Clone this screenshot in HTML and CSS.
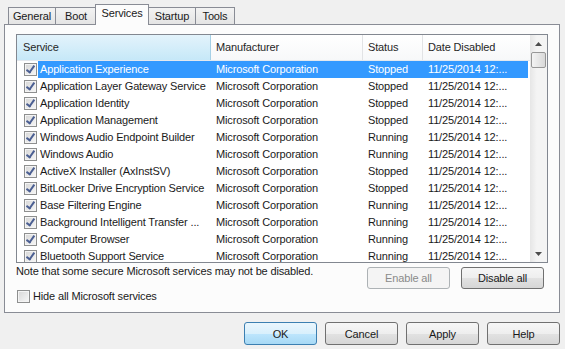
FILE: index.html
```html
<!DOCTYPE html>
<html lang="en">

<head>
  <meta charset="UTF-8">
  <title>System Configuration - Services</title>
  <link rel="stylesheet" href="styles.css">
</head>

<body>

  <div class="dialog">
    <div class="tabs">
      <div class="tab tab-general">General</div>
      <div class="tab tab-boot">Boot</div>
      <div class="tab tab-services active">Services</div>
      <div class="tab tab-startup">Startup</div>
      <div class="tab tab-tools">Tools</div>
    </div>

    <div class="panel">
      <div class="list">
        <div class="table">
          <div class="head">
            <div class="th sorted">Service</div>
            <div class="th">Manufacturer</div>
            <div class="th">Status</div>
            <div class="th">Date Disabled</div>
          </div>

          <div class="row selected">
            <div class="check-cell"><span class="check on"></span></div>
            <div class="cells"><span>Application Experience</span><span>Microsoft Corporation</span><span>Stopped</span><span>11/25/2014 12:...</span></div>
          </div>
          <div class="row">
            <div class="check-cell"><span class="check on"></span></div>
            <div class="cells"><span>Application Layer Gateway Service</span><span>Microsoft Corporation</span><span>Stopped</span><span>11/25/2014 12:...</span></div>
          </div>
          <div class="row">
            <div class="check-cell"><span class="check on"></span></div>
            <div class="cells"><span>Application Identity</span><span>Microsoft Corporation</span><span>Stopped</span><span>11/25/2014 12:...</span></div>
          </div>
          <div class="row">
            <div class="check-cell"><span class="check on"></span></div>
            <div class="cells"><span>Application Management</span><span>Microsoft Corporation</span><span>Stopped</span><span>11/25/2014 12:...</span></div>
          </div>
          <div class="row">
            <div class="check-cell"><span class="check on"></span></div>
            <div class="cells"><span>Windows Audio Endpoint Builder</span><span>Microsoft Corporation</span><span>Running</span><span>11/25/2014 12:...</span></div>
          </div>
          <div class="row">
            <div class="check-cell"><span class="check on"></span></div>
            <div class="cells"><span>Windows Audio</span><span>Microsoft Corporation</span><span>Running</span><span>11/25/2014 12:...</span></div>
          </div>
          <div class="row">
            <div class="check-cell"><span class="check on"></span></div>
            <div class="cells"><span>ActiveX Installer (AxInstSV)</span><span>Microsoft Corporation</span><span>Stopped</span><span>11/25/2014 12:...</span></div>
          </div>
          <div class="row">
            <div class="check-cell"><span class="check on"></span></div>
            <div class="cells"><span>BitLocker Drive Encryption Service</span><span>Microsoft Corporation</span><span>Stopped</span><span>11/25/2014 12:...</span></div>
          </div>
          <div class="row">
            <div class="check-cell"><span class="check on"></span></div>
            <div class="cells"><span>Base Filtering Engine</span><span>Microsoft Corporation</span><span>Running</span><span>11/25/2014 12:...</span></div>
          </div>
          <div class="row">
            <div class="check-cell"><span class="check on"></span></div>
            <div class="cells"><span>Background Intelligent Transfer ...</span><span>Microsoft Corporation</span><span>Running</span><span>11/25/2014 12:...</span></div>
          </div>
          <div class="row">
            <div class="check-cell"><span class="check on"></span></div>
            <div class="cells"><span>Computer Browser</span><span>Microsoft Corporation</span><span>Running</span><span>11/25/2014 12:...</span></div>
          </div>
          <div class="row">
            <div class="check-cell"><span class="check on"></span></div>
            <div class="cells"><span>Bluetooth Support Service</span><span>Microsoft Corporation</span><span>Running</span><span>11/25/2014 12:...</span></div>
          </div>
        </div>

        <div class="scrollbar">
          <div class="arrow">
            <svg width="7" height="4" viewBox="0 0 7 4"><path d="M0 4 L3.5 0 L7 4 Z" fill="#4d4d4d"/></svg>
          </div>
          <div class="thumb"></div>
          <div class="track"></div>
          <div class="arrow">
            <svg width="7" height="4" viewBox="0 0 7 4"><path d="M0 0 L3.5 4 L7 0 Z" fill="#4d4d4d"/></svg>
          </div>
        </div>
      </div>

      <div class="list-footer">
        <div class="note">Note that some secure Microsoft services may not be disabled.</div>
        <div class="list-buttons">
          <button class="btn" disabled>Enable all</button>
          <button class="btn">Disable all</button>
        </div>
      </div>

      <label class="hide-row"><span class="check"></span>Hide all Microsoft services</label>
    </div>

    <div class="dialog-buttons">
      <button class="btn small default">OK</button>
      <button class="btn small">Cancel</button>
      <button class="btn small">Apply</button>
      <button class="btn small">Help</button>
    </div>
  </div>

</body>

</html>
```

FILE: styles.css
```css
body {
  margin: 0;
  padding: 0;
  background-color: #f0f0f0;
  font-family: "Liberation Sans", Arial, sans-serif;
  font-size: 11px;
  letter-spacing: -0.15px;
  color: #1a1a1a;
}

.dialog {
  padding: 4px 5px 0 4px;
}

/* tab strip */

.tabs {
  display: flex;
  align-items: flex-end;
  height: 20px;
  padding-left: 4px;
}

.tab {
  box-sizing: border-box;
  height: 17px;
  line-height: 16px;
  text-align: center;
  border: 1px solid #898c95;
  border-bottom: none;
  margin-right: -1px;
  background: linear-gradient(#f3f3f3, #e4e4e4);
}

.tab-general { width: 48px; }
.tab-boot { width: 42px; }
.tab-services { width: 54px; }
.tab-startup { width: 48px; }
.tab-tools { width: 40px; }

.tab.active {
  position: relative;
  z-index: 1;
  height: 21px;
  line-height: 17px;
  margin: 0 -1px -1px -1px;
  background: #fcfcfc;
}

/* tab page */

.panel {
  border: 1px solid #898c95;
  background-color: #fcfcfc;
  padding: 9px 11px 9px 11px;
}

.list {
  display: flex;
  height: 229px;
  box-sizing: border-box;
  border: 1px solid #828790;
  background-color: #fff;
  overflow: hidden;
}

.table {
  flex: 1;
  overflow: hidden;
}

.head {
  display: grid;
  grid-template-columns: 194px 152px 60px 1fr;
  height: 26px;
  box-sizing: border-box;
  border-bottom: 1px solid #e3e8ee;
}

.th {
  line-height: 25px;
  padding-left: 5px;
  color: #262626;
  border-right: 1px solid #e2e3e5;
  background: linear-gradient(#fff, #f7f8f9);
}

.th:last-child {
  border-right: none;
}

.th.sorted {
  padding-left: 6px;
  border-right-color: #a5d0e6;
  background: linear-gradient(#e3f3fb, #c6e8f8);
}

.row {
  display: flex;
  height: 17px;
  line-height: 17px;
}

.check-cell {
  width: 21px;
  flex: none;
  display: flex;
  align-items: center;
  padding-left: 7px;
  box-sizing: border-box;
}

.check {
  position: relative;
  display: inline-block;
  width: 13px;
  height: 13px;
  box-sizing: border-box;
  border: 1px solid #8e8f8f;
  background: linear-gradient(135deg, #d6d6d6, #f7f7f7);
  box-shadow: inset 0 0 0 1px #f4f4f4;
  flex: none;
}

.check.on::after {
  content: "";
  position: absolute;
  left: 3px;
  top: 0px;
  width: 3px;
  height: 7px;
  border: solid #4b5f92;
  border-width: 0 2px 2px 0;
  transform: rotate(35deg);
}

.cells {
  flex: 1;
  display: grid;
  grid-template-columns: 173px 152px 60px 1fr;
  margin-right: 2px;
}

.cells span {
  padding-left: 5px;
  white-space: nowrap;
  overflow: hidden;
}

.cells span:first-child {
  padding-left: 2px;
}

.row.selected .cells {
  background-color: #3399ff;
  color: #fff;
}

/* scrollbar */

.scrollbar {
  width: 17px;
  flex: none;
  display: flex;
  flex-direction: column;
  background: linear-gradient(90deg, #e6e6e6, #f4f4f4 40%, #f4f4f4);
}

.arrow {
  height: 17px;
  display: flex;
  align-items: center;
  justify-content: center;
}

.thumb {
  height: 16px;
  margin: 0 1px;
  box-sizing: border-box;
  border: 1px solid #979797;
  border-radius: 2px;
  background: linear-gradient(90deg, #f3f3f3, #e6e6e6 50%, #d9d9d9);
}

.track {
  flex: 1;
}

/* below the list */

.list-footer {
  display: flex;
  justify-content: space-between;
  height: 26px;
}

.note {
  line-height: 17px;
}

.list-buttons {
  display: flex;
  gap: 11px;
  margin-top: 4px;
  margin-right: 4px;
}

.btn {
  width: 83px;
  height: 22px;
  padding: 0;
  font: inherit;
  letter-spacing: inherit;
  color: #1a1a1a;
  border: 1px solid #707070;
  border-radius: 3px;
  background: linear-gradient(#f6f6f6, #eeeeee 50%, #e2e2e2 50%, #d6d6d6);
}

.btn:disabled {
  color: #8a8a8a;
  border-color: #adb2b5;
  background: #f4f4f4;
}

.btn.small {
  width: 73px;
  height: 23px;
}

.btn.default {
  border-color: #3c7fb1;
  background: linear-gradient(#eaf6fd, #d9f0fc 50%, #bee6fd 50%, #a7d9f5);
}

.hide-row {
  display: flex;
  align-items: center;
  gap: 3px;
  height: 14px;
  padding-left: 1px;
}

.dialog-buttons {
  display: flex;
  justify-content: flex-end;
  gap: 8px;
  margin-top: 9px;
}
```
